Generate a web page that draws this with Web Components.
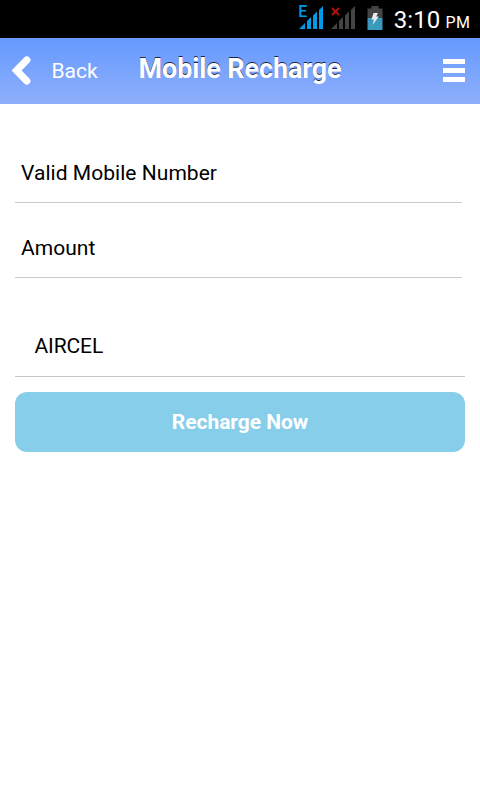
<!DOCTYPE html>
<html lang="en">
<head>
<meta charset="utf-8">
<title>Mobile Recharge</title>
<style>
    body {
        margin: 0;
        background: #fff;
        font-family: Roboto, sans-serif;
    }
</style>
</head>
<body>
<recharge-page></recharge-page>

<script>
const define = (name, content) => {
    const template = document.createElement('template');
    template.innerHTML = content;

    customElements.define(name, class extends HTMLElement {
        constructor() {
            super();
            this.root = this.attachShadow({ mode: 'open' });
            this.root.append(template.content.cloneNode(true));
        }
    });
};

define('signal-icon', `
<style>
    :host { display: block; width: 24px; height: 23px; }
    svg { display: block; fill: var(--signal-colour); }
</style>
<svg width="24" height="23" viewBox="0 0 24 23">
    <path d="M0 23L6 17V23ZM8 15L12 11V23H8ZM14 9.5L18 5.5V23H14ZM20 4L24 0V23H20Z"/>
</svg>
<slot></slot>
`);

define('battery-icon', `
<style>
    :host { display: block; }
    svg { display: block; }
</style>
<svg width="16" height="24" viewBox="0 0 16 24">
    <path d="M4.5 0H11.5V2.5H15.5V12H.5V2.5H4.5Z" fill="#444"/>
    <path d="M.5 12H15.5V24H.5Z" fill="#3a9abb"/>
    <path d="M6.5 7H11L9.2 10.5H11.8L5.5 19L7 13.5H4.5Z" fill="#e4eef2"/>
</svg>
`);

define('status-bar', `
<style>
    :host {
        display: flex;
        justify-content: flex-end;
        align-items: flex-start;
        box-sizing: border-box;
        height: 38px;
        padding: 6px 9.5px 0 0;
        background: #000;
        color: #fff;
    }
    signal-icon { position: relative; margin-right: 8px; --signal-colour: #0099e5; }
    signal-icon.off { margin-right: 12px; --signal-colour: #444; }
    .edge {
        position: absolute;
        top: -2px;
        left: -1px;
        color: #0099e5;
        font-size: 16px;
        font-weight: 500;
        line-height: 16px;
    }
    .cross { position: absolute; top: 1px; left: 0; }
    .time {
        display: flex;
        align-items: baseline;
        margin-left: 10.5px;
        line-height: 28px;
        font-size: 24px;
        letter-spacing: .1px;
    }
    .time small { margin-left: 5px; font-size: 16px; letter-spacing: .5px; }
</style>
<signal-icon><span class="edge">E</span></signal-icon>
<signal-icon class="off">
    <svg class="cross" width="9" height="9" viewBox="0 0 9 9"><path d="M1 1L8 8M8 1L1 8" stroke="#b01010" stroke-width="2"/></svg>
</signal-icon>
<battery-icon></battery-icon>
<div class="time"><span>3:10</span><small>PM</small></div>
`);

define('page-header', `
<style>
    :host {
        display: flex;
        align-items: flex-start;
        box-sizing: border-box;
        height: 66px;
        padding: 18px 15px 0 11px;
        background: linear-gradient(#6699ff, #8eaffb);
        color: #fff;
    }
    .arrow { display: block; margin-right: 20.5px; }
    .back { width: 87px; font-size: 21px; line-height: 30px; }
    h1 {
        flex: 1;
        margin: -3px 0 0;
        font-size: 27px;
        line-height: 32px;
        letter-spacing: -.12px;
        white-space: nowrap;
        text-shadow: 0 -1px 0 #1a2340;
    }
    .menu { display: grid; gap: 4px; width: 22px; margin-top: 3px; }
    .menu i { height: 5px; background: #fff; }
</style>
<svg class="arrow" width="20" height="30" viewBox="0 0 20 30">
    <path d="M15.8 4L5.6 14.5L15.8 25" fill="none" stroke="#fff" stroke-width="7.2" stroke-linecap="round"/>
</svg>
<div class="back">Back</div>
<h1><slot></slot></h1>
<div class="menu"><i></i><i></i><i></i></div>
`);

define('form-field', `
<style>
    :host {
        display: block;
        box-sizing: border-box;
        height: 61px;
        padding-left: 6px;
        border-bottom: 1px solid #c8c8c8;
        color: #000;
        font-size: 21px;
        line-height: 62px;
        letter-spacing: .04px;
        white-space: nowrap;
    }
</style>
<slot></slot>
`);

define('submit-button', `
<style>
    :host { display: block; }
    button {
        display: block;
        width: 100%;
        height: 60px;
        padding: 0;
        border: 0;
        border-radius: 12px;
        background: #87ceeb;
        color: #fff;
        font: bold 21px/60px Roboto, sans-serif;
        letter-spacing: -.05px;
    }
</style>
<button><slot></slot></button>
`);

define('recharge-page', `
<style>
    :host { display: block; height: 800px; overflow: hidden; }
    main { padding: 38px 15px 0; }
    form-field { margin-right: 3px; }
    .amount { margin-top: 14px; }
    .operator { margin: 38px 0 15px; padding-left: 19.5px; line-height: 60px; letter-spacing: -.1px; }
</style>
<status-bar></status-bar>
<page-header>Mobile Recharge</page-header>
<main>
    <form-field>Valid Mobile Number</form-field>
    <form-field class="amount">Amount</form-field>
    <form-field class="operator">AIRCEL</form-field>
    <submit-button>Recharge Now</submit-button>
</main>
`);
</script>
</body>
</html>
